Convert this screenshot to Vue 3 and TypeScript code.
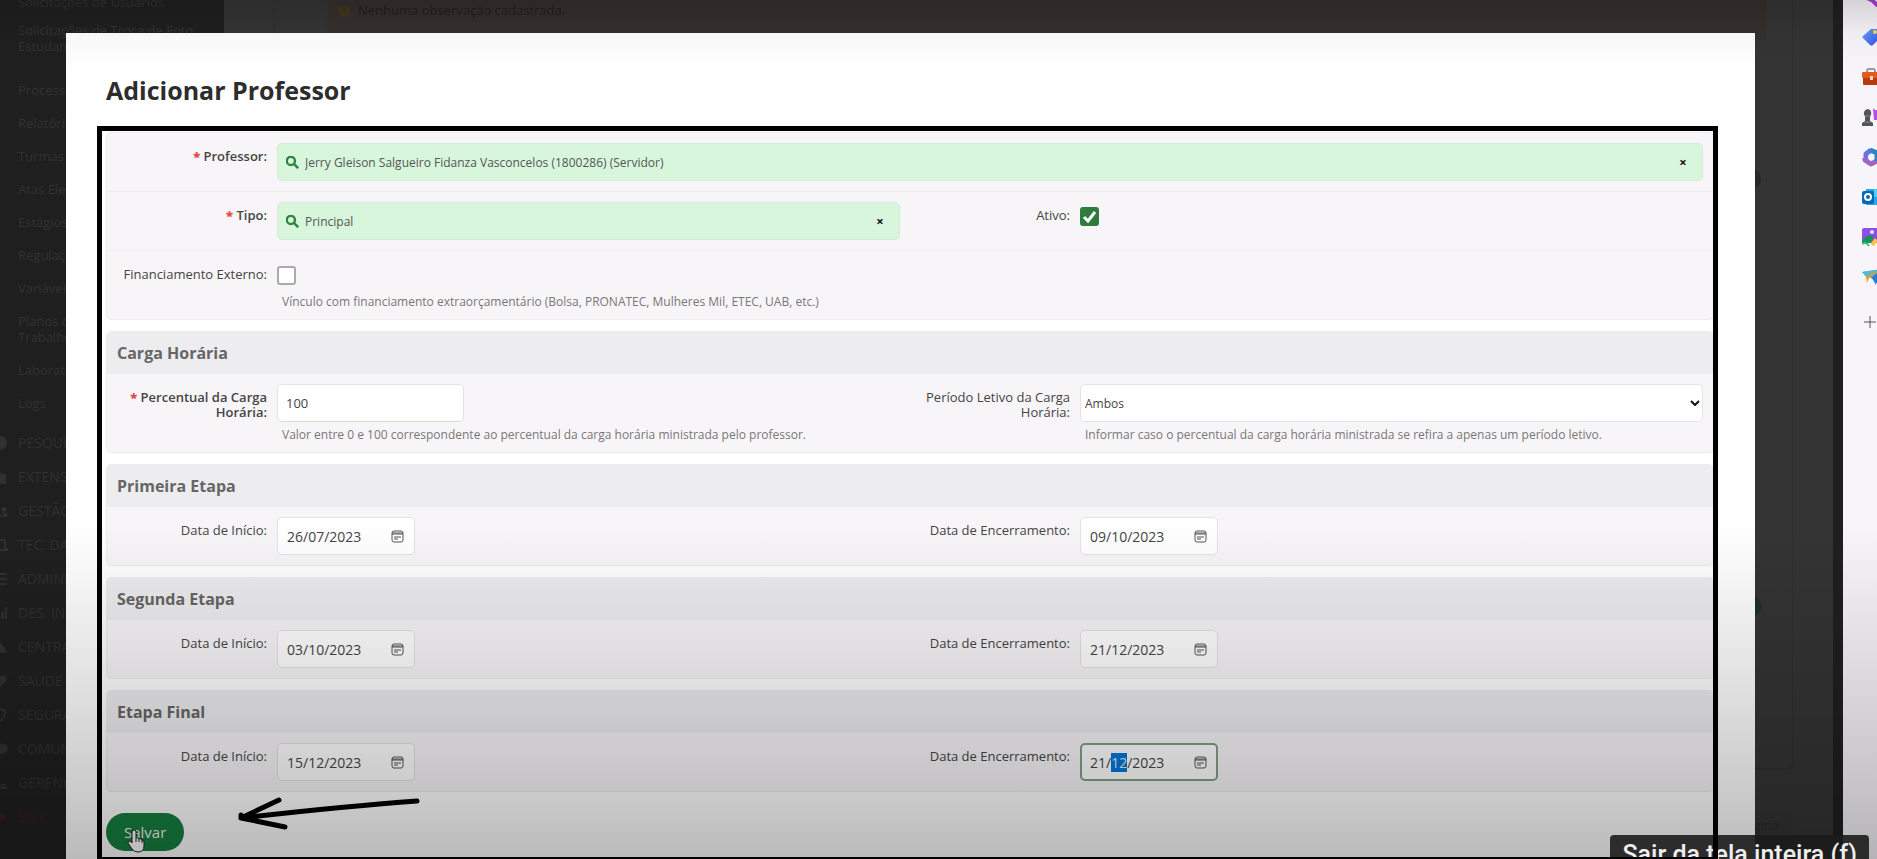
<script setup lang="ts">
import { onMounted, ref } from 'vue'

interface Stage {
  key: string
  title: string
  start: string
  end: string
}

const stages = ref<Stage[]>([
  { key: 'primeira', title: 'Primeira Etapa', start: '26/07/2023', end: '09/10/2023' },
  { key: 'segunda', title: 'Segunda Etapa', start: '03/10/2023', end: '21/12/2023' },
  { key: 'final', title: 'Etapa Final', start: '15/12/2023', end: '21/12/2023' },
])

const professor = ref('Jerry Gleison Salgueiro Fidanza Vasconcelos (1800286) (Servidor)')
const tipo = ref('Principal')
const ativo = ref(true)
const externo = ref(false)
const percentual = ref('100')
const periodo = ref('Ambos')

const links: string[] = [
  'Processos',
  'Relatórios',
  'Turmas',
  'Atas Eletrônicas',
  'Estágios',
  'Regulação',
  'Variáveis',
  'Planos de Trabalho',
  'Laboratórios',
  'Logs',
]

const areas = [
  { name: 'PESQUISA', icon: 'M8 1a7 7 0 1 0 0 14A7 7 0 0 0 8 1z' },
  { name: 'EXTENSÃO', icon: 'M2 15V6l4-4v3l3-3v3h5v10z' },
  { name: 'GESTÃO', icon: 'M5 3a3 3 0 1 1 0 6 3 3 0 0 1 0-6zm7 1a2 2 0 1 1 0 5 2 2 0 0 1 0-5zM0 14c0-5 10-5 10 0zm11 0c0-2 0-3-1-4 3-1 6 0 6 4z' },
  { name: 'TEC. DA INFORMAÇÃO', icon: 'M2 2h12v9h2v3H8v-2h4V4H4v7H2z' },
  { name: 'ADMINISTRAÇÃO', icon: 'M1 2h14v2H1zm0 5h14v2H1zm0 5h14v2H1z' },
  { name: 'DES. INSTITUCIONAL', icon: 'M1 8h3v6H1zm4-3h3v9H5zm4 2h3v7H9zm4-5h2v12h-2z' },
  { name: 'CENTRAL', icon: 'M1 14V8l6-6 7 9v3z' },
  { name: 'SAÚDE', icon: 'M8 14 2 8c-3-5 4-8 6-4 2-4 9-1 6 4z' },
  { name: 'SEGURANÇA', icon: 'M8 1l6 2c0 6-1 9-6 12V13c3-2 4-4 4-8L8 3z' },
  { name: 'COMUNICAÇÃO', icon: 'M8 2a7 5 0 1 1 0 11l-5 2 1-3a7 5 0 0 1 4-10z' },
  { name: 'GERENCIAMENTO', icon: 'M5 2a3 3 0 1 1 0 6 3 3 0 0 1 0-6zM0 14c0-6 9-6 9-2h6v2zm9-5h5v2H9z' },
]

onMounted(() => {
  const field = document.getElementById('final-fim') as HTMLInputElement | null
  field?.focus({ preventScroll: true })
  field?.setSelectionRange(3, 5)
})
</script>

<template>
  <div class="screen">
    <div class="page">
      <nav class="menu" aria-label="Menu principal">
        <a class="link first" href="#">Solicitações de Usuários</a>
        <a class="link tall" href="#">Solicitações de Troca de Foto Estudantes</a>
        <a v-for="l in links" :key="l" class="link" :class="{ narrow: l.startsWith('Planos') }" href="#">{{ l }}</a>
        <div class="areas">
          <a v-for="a in areas" :key="a.name" class="area" href="#">
            <svg viewBox="0 0 16 16" aria-hidden="true"><path :d="a.icon" /></svg>{{ a.name }}
          </a>
          <a class="area exit" href="#">
            <svg viewBox="0 0 16 16" aria-hidden="true"><path d="M2 6h6V2l7 6-7 6v-4H2z" /></svg>SAIR
          </a>
        </div>
      </nav>
      <div class="content">
        <div class="sheet">
          <p class="notice"><span class="dot">!</span>Nenhuma observação cadastrada.</p>
          <i class="knob"></i>
          <i class="knob teal"></i>
        </div>
        <span class="chip">Topo da página</span>
      </div>
      <div class="track"></div>
      <aside class="rail">
        <svg viewBox="0 0 20 20"><circle cx="8" cy="8" r="5" fill="none" stroke="#777" stroke-width="2" /><path d="M7 12l3 1 6 6" stroke="#a63bd8" stroke-width="4" /></svg>
        <svg viewBox="0 0 20 20">
          <defs><linearGradient id="tag" x2="1" y2="1"><stop stop-color="#68a4fa" /><stop offset="1" stop-color="#304be6" /></linearGradient></defs>
          <path d="M9 2h9l1 8-8 8q-2 1-3 0l-7-7q-1-1 0-2z" fill="url(#tag)" /><circle cx="13" cy="5" r="2" fill="#fbe04e" />
        </svg>
        <svg viewBox="0 0 20 20"><path d="M5 6V4q0-2 2-2h4q2 0 2 2v2" fill="none" stroke="#999" stroke-width="2" /><rect y="5" width="20" height="6" rx="1" fill="#e4591d" /><path d="M1 11h18v6q0 1-1 1H2q-1 0-1-1z" fill="#b63a0b" /><rect x="8" y="9" width="3" height="4" fill="#ffd5bf" /></svg>
        <svg viewBox="0 0 20 20"><path d="M11 1l2 2h7v10h-8z" fill="#b44cf0" /><path d="M2 8q-1-5 4-6 4 1 3 6l-1 1v5l3 2v3H0v-3l3-2V9z" fill="#555" /><path d="M3 9h6M2 15h7" stroke="#888" /></svg>
        <svg viewBox="0 0 20 20">
          <path d="M4 13V7l5-4" fill="none" stroke="#6875dd" stroke-width="5" stroke-linejoin="round" /><path d="M3 11v2l6 4 6-3" fill="none" stroke="#9b65c7" stroke-width="5" stroke-linejoin="round" /><path d="M8 3l7 3v8" fill="none" stroke="#2e83c6" stroke-width="5" stroke-linejoin="round" /><circle cx="9" cy="10" r="3" fill="#f7f5f9" />
        </svg>
        <svg viewBox="0 0 20 20"><path d="M4 2h16v16H4z" fill="#28a8ea" /><path d="M12 2h8v8h-8z" fill="#50d0fa" /><rect y="4" width="12" height="13" rx="2" fill="#0868b8" /><circle cx="6" cy="10" r="3" fill="none" stroke="#fff" stroke-width="2" /></svg>
        <svg viewBox="0 0 20 20"><rect y="1" width="19" height="15" rx="2" fill="#8e4fe8" /><circle cx="10" cy="5" r="2" fill="#f5d9ff" /><path d="M0 14q5-8 12-5l-3 7H0z" fill="#14935d" /><path d="M19 7l-9 11" stroke="#ffc43d" stroke-width="4" /><path d="M20 5l-6 7" stroke="#873bd3" stroke-width="3" /><path d="M0 17q4-3 7 2" fill="none" stroke="#40bc72" stroke-width="2" /></svg>
        <svg viewBox="0 0 20 20"><path d="M0 5l20-3-3 14-5-3z" fill="#3a9ee8" /><path d="M0 5l20-3L5 11z" fill="#4bbbd8" /><path d="M4 9l16-7-13 9-2 5z" fill="#e29b31" /><path d="M10 11l8-7-4 14z" fill="#287bd4" /></svg>
        <svg viewBox="0 0 20 20"><path d="M8 5v12M2 11h12" stroke="#555" /></svg>
      </aside>
    </div>

    <div class="backdrop">
      <main class="modal">
        <h1>Adicionar Professor</h1>
        <form class="form" @submit.prevent>
          <section class="panel">
            <div class="row single">
              <label class="req" for="professor"><b>*</b> Professor:</label>
              <div class="pick">
                <svg viewBox="0 0 16 16" aria-hidden="true"><circle cx="6" cy="6" r="5" /><path d="M10 10l5 5" /></svg>
                <input id="professor" v-model="professor" type="text" />
                <button type="button" aria-label="Limpar professor" @click="professor = ''">×</button>
              </div>
            </div>
            <div class="row">
              <label class="req" for="tipo"><b>*</b> Tipo:</label>
              <div class="pick">
                <svg viewBox="0 0 16 16" aria-hidden="true"><circle cx="6" cy="6" r="5" /><path d="M10 10l5 5" /></svg>
                <input id="tipo" v-model="tipo" type="text" />
                <button type="button" aria-label="Limpar tipo" @click="tipo = ''">×</button>
              </div>
              <label for="ativo">Ativo:</label>
              <div class="tick">
                <input id="ativo" v-model="ativo" type="checkbox" />
                <svg v-if="ativo" viewBox="0 0 19 19" aria-hidden="true"><path d="M4 10l4 4 7-9" /></svg>
              </div>
            </div>
            <div class="row single">
              <label for="externo">Financiamento Externo:</label>
              <div>
                <div class="tick">
                  <input id="externo" v-model="externo" type="checkbox" />
                  <svg v-if="externo" viewBox="0 0 19 19" aria-hidden="true"><path d="M4 10l4 4 7-9" /></svg>
                </div>
                <p class="help">Vínculo com financiamento extraorçamentário (Bolsa, PRONATEC, Mulheres Mil, ETEC, UAB, etc.)</p>
              </div>
            </div>
          </section>

          <section class="panel">
            <h2>Carga Horária</h2>
            <div class="row">
              <label class="req" for="percentual"><b>*</b> Percentual da Carga Horária:</label>
              <div>
                <input id="percentual" v-model="percentual" class="box number" type="text" />
                <p class="help">Valor entre 0 e 100 correspondente ao percentual da carga horária ministrada pelo professor.</p>
              </div>
              <label for="periodo">Período Letivo da Carga Horária:</label>
              <div>
                <div class="choice">
                  <select id="periodo" v-model="periodo" class="box">
                    <option>Ambos</option>
                    <option>1º período</option>
                    <option>2º período</option>
                  </select>
                  <svg viewBox="0 0 10 6" aria-hidden="true"><path d="M1 1l4 4 4-4" /></svg>
                </div>
                <p class="help">Informar caso o percentual da carga horária ministrada se refira a apenas um período letivo.</p>
              </div>
            </div>
          </section>

          <section v-for="s in stages" :key="s.key" class="panel">
            <h2>{{ s.title }}</h2>
            <div class="row">
              <label :for="s.key + '-inicio'">Data de Início:</label>
              <div class="box date">
                <input :id="s.key + '-inicio'" v-model="s.start" type="text" />
                <button type="button" aria-label="Abrir calendário"><svg viewBox="0 0 13 13"><rect x="1" y="1" width="11" height="11" rx="2" /><path d="M1 3h11M1 4h11M3 7h7M3 9h4" /></svg></button>
              </div>
              <label :for="s.key + '-fim'">Data de Encerramento:</label>
              <div class="box date">
                <input :id="s.key + '-fim'" v-model="s.end" type="text" />
                <button type="button" aria-label="Abrir calendário"><svg viewBox="0 0 13 13"><rect x="1" y="1" width="11" height="11" rx="2" /><path d="M1 3h11M1 4h11M3 7h7M3 9h4" /></svg></button>
              </div>
            </div>
          </section>

          <div class="actions">
            <button class="save" type="submit">Salvar</button>
            <svg class="hand" viewBox="0 0 18 24" aria-hidden="true"><path d="M5 14V3q0-2 2-2t2 2v6q2-1 3 1 2-1 3 1 2 0 2 2v4q0 6-6 6-4 0-6-3l-4-6q0-2 2-2z" /><path d="M9 9v4M12 10v3M15 11v3" /></svg>
            <svg class="arrow" viewBox="0 0 184 36" aria-hidden="true"><path d="M180 6Q110 11 4 23L42 5M4 23V20M4 23l44 9" /></svg>
          </div>
        </form>
      </main>
    </div>
    <div class="shade"></div>
    <div class="tip" role="tooltip">Sair da tela inteira (f)</div>
  </div>
</template>

<style>
body {
  margin: 0;
}
</style>

<style scoped>
* {
  box-sizing: border-box;
}
.screen {
  position: relative;
  height: 100vh;
  overflow: hidden;
  background: #343434;
  font: 13px/15px "Open Sans", "Noto Sans", sans-serif;
  color: #444;
}
.screen input,
.screen select,
.screen button {
  font-family: inherit;
}
.page {
  display: flex;
  height: 100%;
}
.menu {
  width: 224px;
  flex: none;
  display: flex;
  flex-direction: column;
  gap: 17px;
  padding-left: 18px;
  background: #1f1f1f;
  overflow: hidden;
  font-size: 13px;
  line-height: 16px;
}
.menu a {
  color: #323232;
  text-decoration: none;
  flex: none;
}
.link.first {
  margin: -6px 0 -5px;
}
.link.tall {
  width: 184px;
  height: 43px;
}
.link.narrow {
  width: 80px;
}
.areas {
  display: flex;
  flex-direction: column;
  gap: 18px;
  margin: 7px 0 0 -18px;
  font-size: 14px;
}
.menu .area {
  display: flex;
  gap: 10px;
  margin-left: -8px;
  color: #303030;
}
.area svg {
  width: 16px;
  height: 16px;
  fill: #303030;
}
.menu .exit {
  color: #351d20;
}
.exit svg {
  fill: #351d20;
}
.content {
  flex: 1;
  display: flex;
  flex-direction: column;
  padding: 0 40px 0 50px;
}
.sheet {
  position: relative;
  height: 769px;
  border: 1px solid #2e2e2e;
  border-top: 0;
  border-radius: 0 0 4px 4px;
  padding: 0 26px 0 52px;
}
.notice {
  margin: 0;
  display: flex;
  gap: 8px;
  height: 40px;
  padding: 2px 11px;
  background: #352f2d;
  color: #1f1d1c;
  font-size: 13px;
  line-height: 17px;
}
.dot {
  width: 12px;
  height: 12px;
  margin-top: 3px;
  border-radius: 50%;
  background: #41361a;
  color: #332e2c;
  font-size: 10px;
  font-weight: 700;
  line-height: 12px;
  text-align: center;
}
.knob {
  position: absolute;
  right: 31px;
  top: 168px;
  width: 22px;
  height: 22px;
  border-radius: 50%;
  background: #282828;
}
.knob.teal {
  top: 595px;
  background: #1b302d;
}
.chip {
  align-self: flex-end;
  margin-top: 43px;
  padding: 6px 14px;
  border-radius: 14px;
  background: #333;
  color: #262626;
}
.track {
  width: 10px;
  background: #1f1f1f;
}
.rail {
  width: 34px;
  flex: none;
  overflow: hidden;
  background: #f7f5f9;
  padding-left: 19px;
}
.rail svg {
  display: block;
  width: 20px;
  height: 20px;
  margin-bottom: 20px;
}
.rail svg:first-child {
  margin-top: -13px;
}
.rail svg:last-child {
  margin-top: 24px;
}
.backdrop {
  position: absolute;
  inset: 33px 122px 0 66px;
}
.modal {
  min-height: 100%;
  padding: 41px 41px 0 40px;
  background: #fff;
}
h1 {
  margin: 0 0 25px;
  color: #2d2d2d;
  font-size: 25px;
  line-height: 33px;
  font-weight: 700;
}
.form {
  position: relative;
  display: flex;
  flex-direction: column;
  gap: 11px;
  padding-bottom: 6px;
}
.form::after {
  content: "";
  position: absolute;
  z-index: 3;
  inset: -6px -4px -5px -9px;
  border: 5px solid #000;
  pointer-events: none;
}
.panel {
  border: 1px solid #ececee;
  border-radius: 5px;
  background: #f7f5f8;
  overflow: hidden;
}
h2 {
  margin: -1px 0 0;
  padding: 2px 10px 0;
  background: #ededef;
  color: #666;
  font-size: 16px;
  line-height: 41px;
  font-weight: 700;
}
.row {
  display: grid;
  grid-template-columns: 160px minmax(0, 1fr) 160px minmax(0, 1fr);
  column-gap: 10px;
  padding: 10px 10px 10px 0;
}
.row.single {
  grid-template-columns: 160px minmax(0, 1fr);
}
.row + .row {
  border-top: 1px solid #efedf0;
}
label {
  padding-top: 6px;
  text-align: right;
}
.req {
  font-weight: 600;
}
.req b {
  color: #e84545;
}
.help {
  margin: 5px 0 0 5px;
  color: #777;
  font-size: 12px;
  white-space: nowrap;
}
.pick {
  display: flex;
  align-items: center;
  height: 38px;
  padding: 0 12px 0 8px;
  border: 1px solid #d3ecd9;
  border-radius: 5px;
  background: #d7f6dc;
}
.pick svg {
  width: 13px;
  height: 13px;
  fill: none;
  stroke: #2e8540;
  stroke-width: 3;
}
.pick input {
  flex: 1;
  min-width: 0;
  border: 0;
  padding: 0 6px;
  background: none;
  color: #555;
  font-size: 12px;
  outline: none;
}
.pick button {
  border: 0;
  padding: 0;
  width: 14px;
  background: none;
  color: #111;
  font-size: 13px;
  font-weight: 700;
}
.tick {
  display: grid;
  grid-template-columns: 19px;
  height: 28px;
  padding-top: 5px;
}
.tick input,
.tick svg {
  grid-area: 1 / 1;
  width: 19px;
  height: 19px;
}
.tick input {
  appearance: none;
  margin: 0;
  border: 2px solid #aaa;
  border-radius: 3px;
  background: #fff;
}
.tick input:checked {
  border-color: #2f7a3d;
  background: #2f7a3d;
}
.tick svg {
  fill: none;
  stroke: #fff;
  stroke-width: 3;
  pointer-events: none;
}
.box {
  display: block;
  height: 38px;
  border: 1px solid #e3e3e5;
  border-radius: 5px;
  background: #fff;
  color: #444;
  font-size: 14px;
  outline: none;
}
.number {
  width: 187px;
  padding: 0 8px;
  border-bottom-color: #cde5cf;
  font-size: 13px;
}
.choice {
  position: relative;
}
select.box {
  appearance: none;
  width: 100%;
  padding: 0 4px;
  font-size: 12px;
  font-weight: 500;
}
.choice svg {
  position: absolute;
  right: 3px;
  top: 16px;
  width: 10px;
  height: 6px;
  fill: none;
  stroke: #111;
  stroke-width: 2;
  pointer-events: none;
}
.date {
  display: flex;
  align-items: center;
  width: 138px;
  padding: 0 10px 0 9px;
}
.date:focus-within {
  border: 2px solid #7f9f86;
  padding: 0 9px 0 8px;
}
.date input {
  flex: 1;
  min-width: 0;
  border: 0;
  padding: 0;
  background: none;
  color: #444;
  font-size: 14px;
  outline: none;
}
.date input::selection {
  background: #0078d8;
  color: #d8ecff;
}
.date button {
  border: 0;
  padding: 0;
  background: none;
}
.date svg {
  display: block;
  width: 13px;
  height: 13px;
  fill: none;
  stroke: #555;
}
.actions {
  position: relative;
  padding-top: 10px;
}
.save {
  display: block;
  border: 0;
  border-radius: 19px;
  height: 38px;
  padding: 0 18px;
  background: #168040;
  color: #f4f4f4;
  font-size: 15px;
}
.hand {
  position: absolute;
  left: 21px;
  top: 26px;
  width: 18px;
  height: 24px;
  fill: #fff;
  stroke: #222;
}
.arrow {
  position: absolute;
  z-index: 3;
  left: 131px;
  top: -8px;
  width: 184px;
  height: 36px;
  fill: none;
  stroke: #000;
  stroke-width: 5;
  stroke-linecap: round;
  stroke-linejoin: round;
}
.shade {
  position: absolute;
  inset: 0;
  z-index: 1;
  pointer-events: none;
  background: linear-gradient(rgba(0, 0, 0, 0.14), rgba(0, 0, 0, 0.03) 4%, transparent 8%, transparent 61%, rgba(0, 0, 0, 0.03) 66%, rgba(0, 0, 0, 0.12) 80%, rgba(0, 0, 0, 0.21) 93%, rgba(0, 0, 0, 0.27));
}
.tip {
  position: absolute;
  z-index: 2;
  right: 8px;
  bottom: -15px;
  padding: 0 12px;
  border-radius: 4px;
  background: rgba(28, 28, 28, 0.9);
  color: #eee;
  font: 500 25px/39px Roboto, sans-serif;
}
</style>
